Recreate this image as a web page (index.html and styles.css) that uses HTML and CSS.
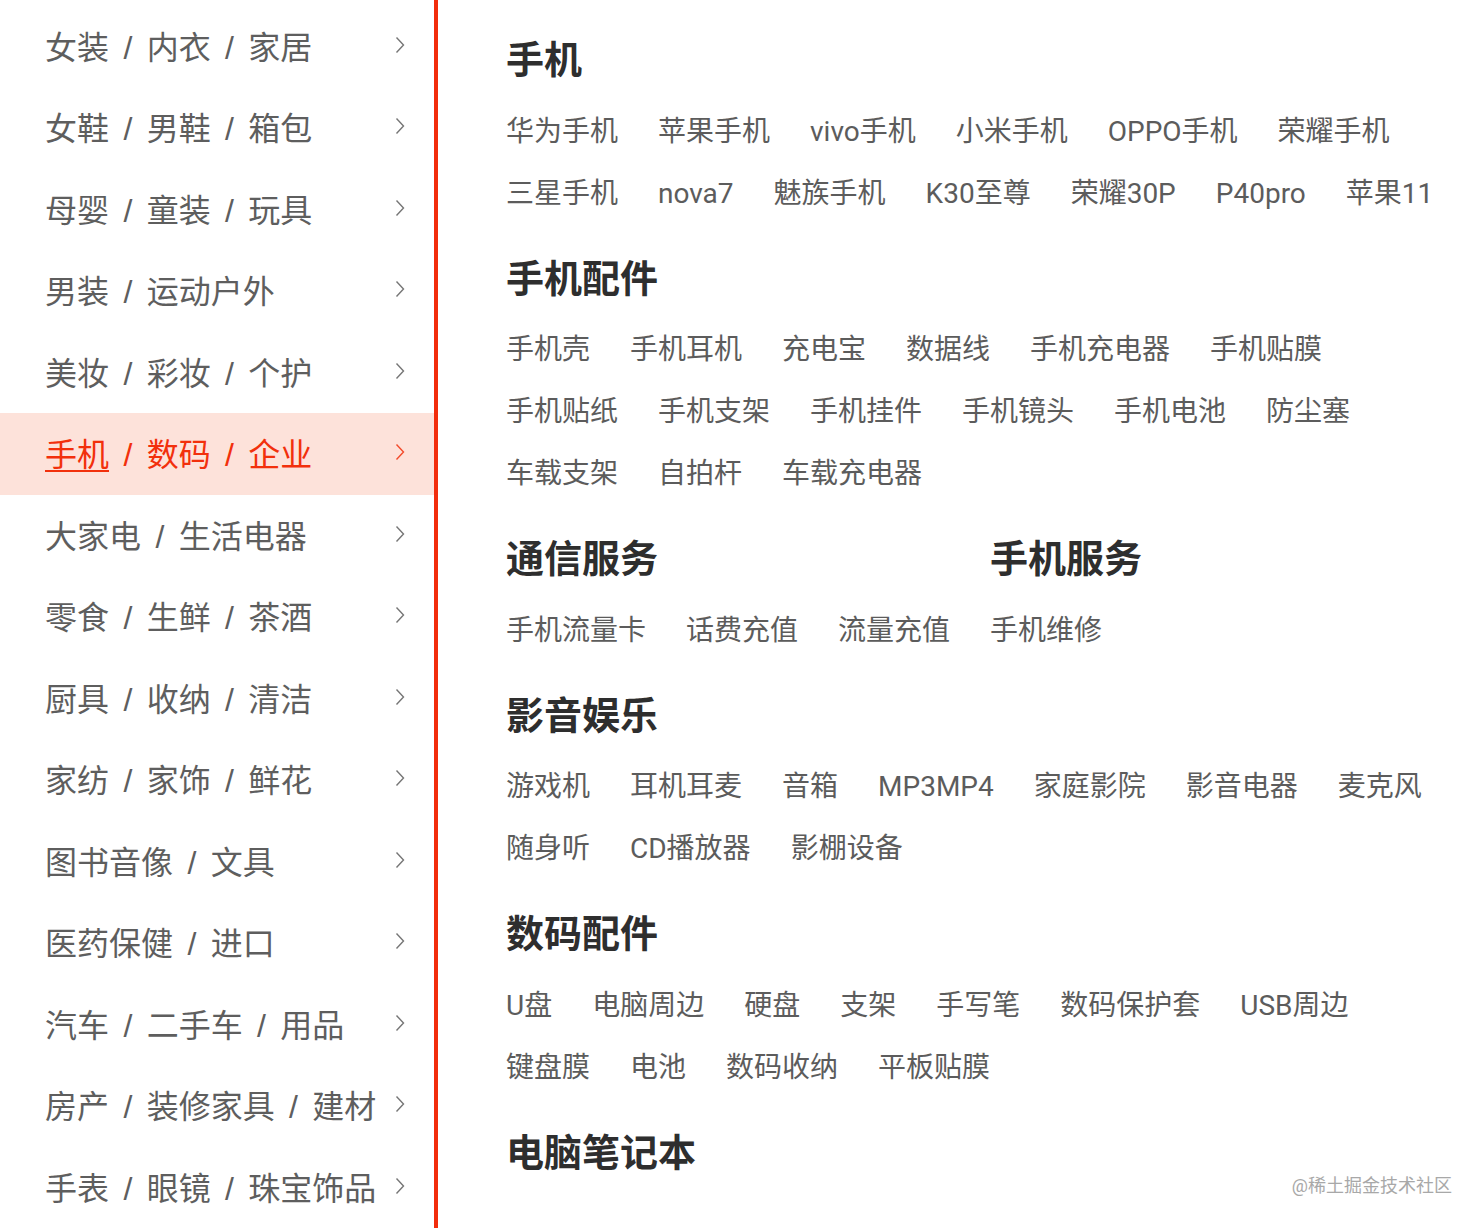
FILE: index.html
```html
<!DOCTYPE html>
<html lang="zh-CN">
<head>
<meta charset="utf-8">
<title>分类</title>
<link rel="stylesheet" href="styles.css">
</head>
<body>
<div class="page">
  <nav class="sidebar">
    <div class="cat"><span class="cat-text">女装 / 内衣 / 家居</span><svg class="chev" viewBox="0 0 10 18"><path d="M1.5 1.5 L8.5 9 L1.5 16.5"/></svg></div>
    <div class="cat"><span class="cat-text">女鞋 / 男鞋 / 箱包</span><svg class="chev" viewBox="0 0 10 18"><path d="M1.5 1.5 L8.5 9 L1.5 16.5"/></svg></div>
    <div class="cat"><span class="cat-text">母婴 / 童装 / 玩具</span><svg class="chev" viewBox="0 0 10 18"><path d="M1.5 1.5 L8.5 9 L1.5 16.5"/></svg></div>
    <div class="cat"><span class="cat-text">男装 / 运动户外</span><svg class="chev" viewBox="0 0 10 18"><path d="M1.5 1.5 L8.5 9 L1.5 16.5"/></svg></div>
    <div class="cat"><span class="cat-text">美妆 / 彩妆 / 个护</span><svg class="chev" viewBox="0 0 10 18"><path d="M1.5 1.5 L8.5 9 L1.5 16.5"/></svg></div>
    <div class="cat active"><span class="cat-text"><span class="u">手机</span> / 数码 / 企业</span><svg class="chev" viewBox="0 0 10 18"><path d="M1.5 1.5 L8.5 9 L1.5 16.5"/></svg></div>
    <div class="cat"><span class="cat-text">大家电 / 生活电器</span><svg class="chev" viewBox="0 0 10 18"><path d="M1.5 1.5 L8.5 9 L1.5 16.5"/></svg></div>
    <div class="cat"><span class="cat-text">零食 / 生鲜 / 茶酒</span><svg class="chev" viewBox="0 0 10 18"><path d="M1.5 1.5 L8.5 9 L1.5 16.5"/></svg></div>
    <div class="cat"><span class="cat-text">厨具 / 收纳 / 清洁</span><svg class="chev" viewBox="0 0 10 18"><path d="M1.5 1.5 L8.5 9 L1.5 16.5"/></svg></div>
    <div class="cat"><span class="cat-text">家纺 / 家饰 / 鲜花</span><svg class="chev" viewBox="0 0 10 18"><path d="M1.5 1.5 L8.5 9 L1.5 16.5"/></svg></div>
    <div class="cat"><span class="cat-text">图书音像 / 文具</span><svg class="chev" viewBox="0 0 10 18"><path d="M1.5 1.5 L8.5 9 L1.5 16.5"/></svg></div>
    <div class="cat"><span class="cat-text">医药保健 / 进口</span><svg class="chev" viewBox="0 0 10 18"><path d="M1.5 1.5 L8.5 9 L1.5 16.5"/></svg></div>
    <div class="cat"><span class="cat-text">汽车 / 二手车 / 用品</span><svg class="chev" viewBox="0 0 10 18"><path d="M1.5 1.5 L8.5 9 L1.5 16.5"/></svg></div>
    <div class="cat"><span class="cat-text">房产 / 装修家具 / 建材</span><svg class="chev" viewBox="0 0 10 18"><path d="M1.5 1.5 L8.5 9 L1.5 16.5"/></svg></div>
    <div class="cat"><span class="cat-text">手表 / 眼镜 / 珠宝饰品</span><svg class="chev" viewBox="0 0 10 18"><path d="M1.5 1.5 L8.5 9 L1.5 16.5"/></svg></div>
  </nav>
  <main class="panel">
    <section class="group">
      <h2 class="group-title">手机</h2>
      <div class="items">
        <span>华为手机</span><span>苹果手机</span><span>vivo手机</span><span>小米手机</span><span>OPPO手机</span><span>荣耀手机</span>
        <span>三星手机</span><span>nova7</span><span>魅族手机</span><span>K30至尊</span><span>荣耀30P</span><span>P40pro</span><span>苹果11</span>
      </div>
    </section>
    <section class="group">
      <h2 class="group-title">手机配件</h2>
      <div class="items">
        <span>手机壳</span><span>手机耳机</span><span>充电宝</span><span>数据线</span><span>手机充电器</span><span>手机贴膜</span>
        <span>手机贴纸</span><span>手机支架</span><span>手机挂件</span><span>手机镜头</span><span>手机电池</span><span>防尘塞</span>
        <span>车载支架</span><span>自拍杆</span><span>车载充电器</span>
      </div>
    </section>
    <div class="group-row">
      <section class="group">
        <h2 class="group-title">通信服务</h2>
        <div class="items">
          <span>手机流量卡</span><span>话费充值</span><span>流量充值</span>
        </div>
      </section>
      <section class="group">
        <h2 class="group-title">手机服务</h2>
        <div class="items">
          <span>手机维修</span>
        </div>
      </section>
    </div>
    <section class="group">
      <h2 class="group-title">影音娱乐</h2>
      <div class="items">
        <span>游戏机</span><span>耳机耳麦</span><span>音箱</span><span>MP3MP4</span><span>家庭影院</span><span>影音电器</span><span>麦克风</span>
        <span>随身听</span><span>CD播放器</span><span>影棚设备</span>
      </div>
    </section>
    <section class="group">
      <h2 class="group-title">数码配件</h2>
      <div class="items">
        <span>U盘</span><span>电脑周边</span><span>硬盘</span><span>支架</span><span>手写笔</span><span>数码保护套</span><span>USB周边</span>
        <span>键盘膜</span><span>电池</span><span>数码收纳</span><span>平板贴膜</span>
      </div>
    </section>
    <section class="group">
      <h2 class="group-title">电脑笔记本</h2>
    </section>
  </main>
</div>
<div class="watermark">@稀土掘金技术社区</div>
</body>
</html>
```
FILE: styles.css
```css
html, body {
  margin: 0;
  padding: 0;
  background: #fff;
}
body {
  font-family: Roboto, "Noto Sans CJK SC", sans-serif;
  width: 1484px;
  height: 1228px;
  overflow: hidden;
  position: relative;
}
.page {
  display: flex;
  height: 1228px;
}
.sidebar {
  width: 434px;
  flex: none;
  border-right: 4px solid #f22d0c;
  padding-top: 5.5px;
  box-sizing: content-box;
  font-family: "Liberation Sans", "Noto Sans CJK SC", sans-serif;
}
.cat {
  height: 81.5px;
  box-sizing: border-box;
  display: flex;
  align-items: center;
  justify-content: space-between;
  padding: 0 29px 3px 45px;
  font-size: 32px;
  color: #5e5e5e;
}
.cat.active {
  background: #fde2da;
  color: #f2300c;
}
.cat-text {
  white-space: nowrap;
  word-spacing: 5.5px;
}
.u {
  text-decoration: underline;
  text-underline-offset: 4px;
  text-decoration-thickness: 2px;
}
.chev {
  width: 10px;
  height: 18px;
  flex: none;
  fill: none;
  stroke: currentColor;
  stroke-width: 1.4;
  opacity: 0.85;
}
.panel {
  flex: 1;
  padding: 35px 20px 0 68px;
}
.group {
  margin-bottom: 29px;
}
.group-title {
  margin: 0 0 15.5px 0;
  font-size: 38px;
  line-height: 50px;
  font-weight: 700;
  color: #2e2e2e;
}
.items {
  display: flex;
  flex-wrap: wrap;
  column-gap: 40px;
  font-size: 28px;
  line-height: 62px;
  color: #5c5c5c;
  white-space: nowrap;
}
.group-row {
  display: flex;
  column-gap: 40px;
}
.watermark {
  position: absolute;
  right: 32px;
  bottom: 30px;
  font-size: 18px;
  color: #a8a8a8;
  line-height: 24px;
}
```
